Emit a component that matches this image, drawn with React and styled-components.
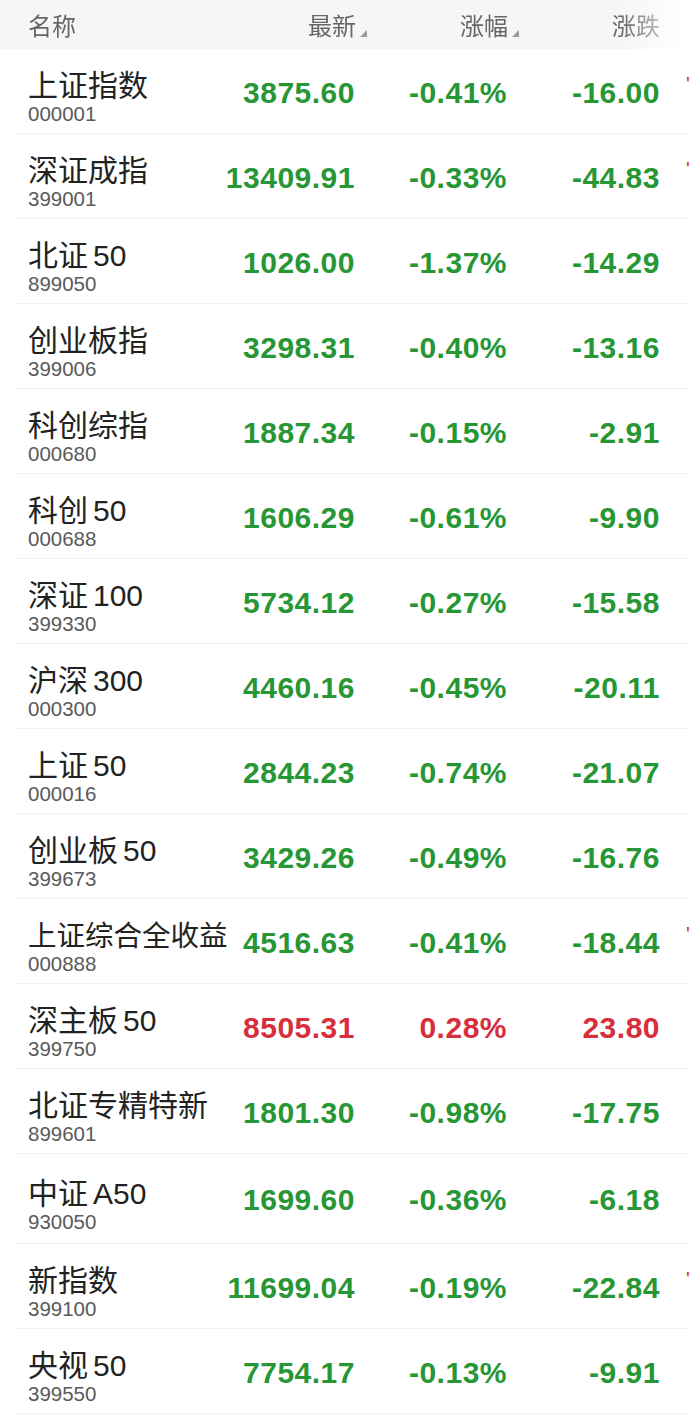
import React from "react";
import styled, { createGlobalStyle } from "styled-components";

const GlobalStyle = createGlobalStyle`
  body {
    margin: 0;
    background: #ffffff;
    overflow: hidden;
  }
`;

const NUM_FONT = `"Liberation Sans", Arial, sans-serif`;
const CJK_FONT = `"Liberation Sans", "Noto Sans CJK SC", sans-serif`;

const GREEN = "#279634";
const RED = "#d62f3b";

const Page = styled.div`
  width: 690px;
  height: 1418px;
  overflow: hidden;
  background: #ffffff;
`;

// HEADER

const Header = styled.div`
  display: grid;
  grid-template-columns: 197px 130px 152px 153px 30px;
  align-items: center;
  height: 49px;
  padding-left: 28px;
  background: #f5f6f8;
  font-family: ${CJK_FONT};
  font-size: 24px;
  color: #666666;
  -webkit-mask-image: linear-gradient(to right, #000 620px, rgba(0, 0, 0, 0.35) 665px, rgba(0, 0, 0, 0) 690px);
  mask-image: linear-gradient(to right, #000 620px, rgba(0, 0, 0, 0.35) 665px, rgba(0, 0, 0, 0) 690px);
`;

const HeadCell = styled.div`
  display: flex;
  justify-content: ${(p) => (p.$right ? "flex-end" : "flex-start")};
  align-items: flex-end;
  white-space: nowrap;
  margin-right: ${(p) => (p.$sort ? "-12px" : "0")};
`;

const SortMark = styled.span`
  display: inline-block;
  width: 0;
  height: 0;
  margin-left: 4px;
  margin-bottom: 5px;
  border-left: 7px solid transparent;
  border-bottom: 7px solid #9a9a9a;
`;

// ROWS

const Row = styled.div`
  display: grid;
  grid-template-columns: 197px 130px 152px 153px 30px;
  align-items: center;
  height: ${(p) => p.$h}px;
  box-sizing: border-box;
  margin-left: 15px;
  padding-left: 13px;
  border-bottom: 1px solid #efefef;
  overflow: hidden;
`;

const NameBlock = styled.div`
  display: flex;
  flex-direction: column;
  white-space: nowrap;
  padding-top: 14px;
`;

const Name = styled.div`
  font-family: ${CJK_FONT};
  font-size: ${(p) => p.$size}px;
  line-height: 32px;
  color: #222222;
`;

const Code = styled.div`
  font-family: ${NUM_FONT};
  font-size: 20.5px;
  line-height: 24px;
  color: #5a5a5a;
`;

const Num = styled.div`
  font-family: ${NUM_FONT};
  font-weight: 700;
  font-size: 30px;
  letter-spacing: 0.5px;
  text-align: right;
  white-space: nowrap;
  color: ${(p) => (p.$up ? RED : GREEN)};
  padding-top: 3px;
`;

const EdgeCell = styled.div`
  padding-left: 26px;
  padding-bottom: 14px;
  font-family: ${NUM_FONT};
  font-size: 20px;
  color: ${RED};
  white-space: nowrap;
  overflow: hidden;
`;

const rows = [
  { name: "上证指数", code: "000001", price: "3875.60", pct: "-0.41%", chg: "-16.00", edge: true },
  { name: "深证成指", code: "399001", price: "13409.91", pct: "-0.33%", chg: "-44.83", edge: true },
  { name: "北证\u200650", code: "899050", price: "1026.00", pct: "-1.37%", chg: "-14.29" },
  { name: "创业板指", code: "399006", price: "3298.31", pct: "-0.40%", chg: "-13.16" },
  { name: "科创综指", code: "000680", price: "1887.34", pct: "-0.15%", chg: "-2.91" },
  { name: "科创\u200650", code: "000688", price: "1606.29", pct: "-0.61%", chg: "-9.90" },
  { name: "深证\u2006100", code: "399330", price: "5734.12", pct: "-0.27%", chg: "-15.58" },
  { name: "沪深\u2006300", code: "000300", price: "4460.16", pct: "-0.45%", chg: "-20.11" },
  { name: "上证\u200650", code: "000016", price: "2844.23", pct: "-0.74%", chg: "-21.07" },
  { name: "创业板\u200650", code: "399673", price: "3429.26", pct: "-0.49%", chg: "-16.76" },
  { name: "上证综合全收益", code: "000888", price: "4516.63", pct: "-0.41%", chg: "-18.44", size: 28.5, edge: true },
  { name: "深主板\u200650", code: "399750", price: "8505.31", pct: "0.28%", chg: "23.80", up: true },
  { name: "北证专精特新", code: "899601", price: "1801.30", pct: "-0.98%", chg: "-17.75" },
  { name: "中证\u2006A50", code: "930050", price: "1699.60", pct: "-0.36%", chg: "-6.18", h: 90 },
  { name: "新指数", code: "399100", price: "11699.04", pct: "-0.19%", chg: "-22.84", edge: true },
  { name: "央视\u200650", code: "399550", price: "7754.17", pct: "-0.13%", chg: "-9.91" },
];

const App = () => {
  return (
    <Page>
      <GlobalStyle />
      <Header>
        <HeadCell>名称</HeadCell>
        <HeadCell $right $sort>
          最新<SortMark />
        </HeadCell>
        <HeadCell $right $sort>
          涨幅<SortMark />
        </HeadCell>
        <HeadCell $right>涨跌</HeadCell>
        <HeadCell />
      </Header>

      {rows.map((r) => (
        <Row key={r.code} $h={r.h || 85}>
          <NameBlock>
            <Name $size={r.size || 30}>{r.name}</Name>
            <Code>{r.code}</Code>
          </NameBlock>
          <Num $up={r.up}>{r.price}</Num>
          <Num $up={r.up}>{r.pct}</Num>
          <Num $up={r.up}>{r.chg}</Num>
          <EdgeCell>{r.edge ? "'" : ""}</EdgeCell>
        </Row>
      ))}
    </Page>
  );
};

export default App;
